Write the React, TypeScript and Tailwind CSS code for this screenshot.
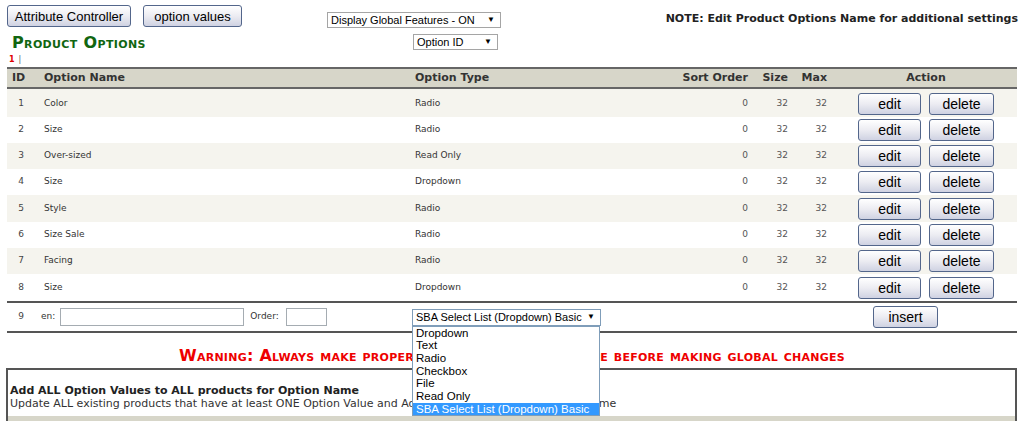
import React from "react";

const rows: [number, string, string, string][] = [
  [1, "Color", "Radio", "h-[28px] pt-[2px] bg-[#f5f4ee]"],
  [2, "Size", "Radio", "h-[26px] bg-white"],
  [3, "Over-sized", "Read Only", "h-[26px] bg-[#f5f4ee]"],
  [4, "Size", "Dropdown", "h-[26px] bg-white"],
  [5, "Style", "Radio", "h-[27px] bg-[#f5f4ee]"],
  [6, "Size Sale", "Radio", "h-[26px] bg-white"],
  [7, "Facing", "Radio", "h-[26px] bg-[#f5f4ee]"],
  [8, "Size", "Dropdown", "h-[27px] bg-white"],
];

const btn =
  "flex items-center justify-center border border-[#53668b] rounded-[3px] bg-linear-to-b from-[#ffffff] via-[#ececf2] to-[#cfd2e2] text-black font-['Liberation_Sans',Arial,sans-serif] leading-none";

function Arrow() {
  return <span className="text-[8px] leading-none text-black">▼</span>;
}

export default function App() {
  const opts = ["Dropdown", "Text", "Radio", "Checkbox", "File", "Read Only", "SBA Select List (Dropdown) Basic"];
  return (
    <div className="w-[1024px] h-[421px] overflow-hidden bg-white font-['DejaVu_Sans',Verdana,sans-serif] text-[#333]">
      {/* top area */}
      <div className="flex h-[67px]">
        <div className="w-[327px] pl-[7px] pt-[5px] flex flex-col">
          <div className="flex gap-[12px]">
            <div className={`${btn} w-[124px] h-[22px] text-[13px]`}>Attribute Controller</div>
            <div className={`${btn} w-[99px] h-[22px] text-[13px]`}>option values</div>
          </div>
          <div className="mt-[7px] ml-[5px] text-[16px] leading-[18px] tracking-[0.35px] font-bold text-[#116611] [font-variant:small-caps]">
            Product Options
          </div>
          <div className="mt-[3px] ml-[2px] flex items-center gap-[4px] text-[8px] leading-[10px]">
            <span className="text-[#e00000] font-bold">1</span>
            <span className="text-[#666]">|</span>
          </div>
        </div>
        <div className="pt-[12px] flex flex-col font-['Liberation_Sans',Arial,sans-serif]">
          <div className="w-[174px] h-[16px] border border-[#a5a5a5] bg-white flex items-center justify-between pl-[3px] pr-[5px] text-[11px] text-black">
            <span>Display Global Features - ON</span>
            <Arrow />
          </div>
          <div className="mt-[6px] ml-[86px] w-[85px] h-[16px] border border-[#a5a5a5] bg-white flex items-center justify-between pl-[3px] pr-[5px] text-[11px] text-black">
            <span>Option ID</span>
            <Arrow />
          </div>
        </div>
        <div className="ml-auto pr-[6px] pt-[12px] text-[11px] leading-[13px] font-bold text-[#222]">
          NOTE: Edit Product Options Name for additional settings
        </div>
      </div>

      {/* table */}
      <div className="ml-[7px] w-[1010px]">
        <div className="flex items-center h-[22px] border-y-2 border-[#666] bg-[#d7d6c9] text-[11px] font-bold text-[#333]">
          <div className="w-[33px] pl-[5px]">ID</div>
          <div className="w-[371px] pl-[4px]">Option Name</div>
          <div className="w-[264px] pl-[4px]">Option Type</div>
          <div className="w-[73px] text-right">Sort Order</div>
          <div className="w-[40px] text-right">Size</div>
          <div className="w-[39px] text-right">Max</div>
          <div className="w-[190px] pl-[8px] text-center">Action</div>
        </div>
        {rows.map(([id, name, type, cls]) => (
          <div key={id} className={`flex items-center text-[9px] text-[#333] ${cls}`}>
            <div className="w-[33px] pr-[16px] text-right text-[#444]">{id}</div>
            <div className="w-[371px] pl-[4px]">{name}</div>
            <div className="w-[264px] pl-[4px]">{type}</div>
            <div className="w-[73px] text-right text-[#555]">0</div>
            <div className="w-[40px] text-right text-[#555]">32</div>
            <div className="w-[39px] text-right text-[#555]">32</div>
            <div className="w-[190px] pl-[8px] flex justify-center gap-[8px]">
              <div className={`${btn} w-[63px] h-[22px] text-[14px]`}>edit</div>
              <div className={`${btn} w-[65px] h-[22px] text-[14px]`}>delete</div>
            </div>
          </div>
        ))}
        <div className="flex items-center h-[32px] border-y-2 border-[#555] text-[9px] text-[#333]">
          <div className="w-[33px] pr-[16px] text-right text-[#444]">9</div>
          <div className="w-[371px] pl-[1px] flex items-center">
            <span>en:</span>
            <div className="ml-[5px] w-[184px] h-[18px] border border-[#a5acb2] bg-white" />
            <span className="ml-[6px]">Order:</span>
            <div className="ml-[7px] w-[41px] h-[18px] border border-[#a5acb2] bg-white" />
          </div>
          <div className="w-[264px] pl-[1px]">
            <div className="relative w-[189px]">
              <div className="w-[189px] h-[17px] border border-[#7f9db9] bg-white flex items-center justify-between pl-[3px] pr-[5px] font-['Liberation_Sans',Arial,sans-serif] text-[11px] text-black">
                <span>SBA Select List (Dropdown) Basic</span>
                <Arrow />
              </div>
              <div className="absolute left-0 top-full w-[188px] border border-[#7f9db9] bg-white flex flex-col font-['Liberation_Sans',Arial,sans-serif] text-[11.5px] text-black z-10">
                {opts.map((o, i) => (
                  <div
                    key={o}
                    className={`h-[12.7px] leading-[12.7px] pl-[3px] ${i === opts.length - 1 ? "bg-[#3399ff] text-white" : ""}`}
                  >
                    {o}
                  </div>
                ))}
              </div>
            </div>
          </div>
          <div className="w-[73px]" />
          <div className="w-[40px]" />
          <div className="w-[39px]" />
          <div className="w-[190px] pl-[46px] flex">
            <div className={`${btn} w-[65px] h-[22px] text-[14px]`}>insert</div>
          </div>
        </div>
      </div>

      {/* warning */}
      <div className="mt-[14px] text-center text-[16px] leading-[18px] tracking-[0.25px] font-bold text-[#ee0000] [font-variant:small-caps]">
        Warning: Always make proper backup of your database before making global changes
      </div>

      {/* box */}
      <div className="mt-[3px] ml-[6px] w-[1011px] h-[80px] border-2 border-[#555] pt-[14px]">
        <div className="pl-[2px] text-[11px] leading-[13px] font-bold text-[#222]">
          Add ALL Option Values to ALL products for Option Name
        </div>
        <div className="pl-[2px] text-[11px] leading-[13px] text-[#333]">
          Update ALL existing products that have at least ONE Option Value and Add ALL Option Values to Option Name
        </div>
        <div className="mt-[6px] h-[20px] bg-[#d7d6c9]" />
      </div>
    </div>
  );
}
